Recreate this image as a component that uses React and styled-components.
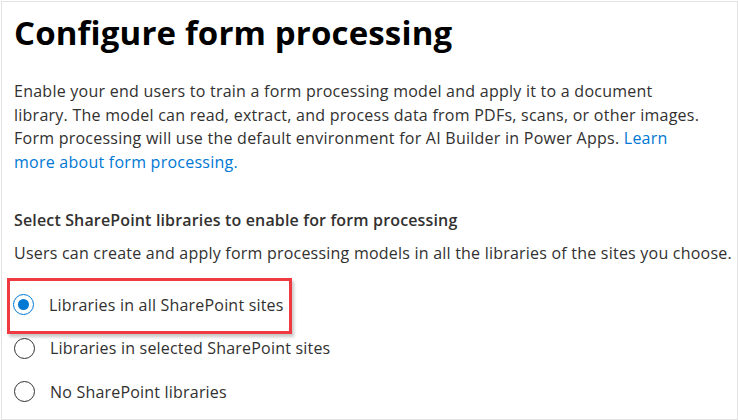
import styled, { createGlobalStyle } from "styled-components";

const GlobalStyle = createGlobalStyle`
  body {
    margin: 0;
    background: #ffffff;
    font-family: "Open Sans", "Noto Sans", sans-serif;
  }
`;

const options = [
  { id: "all", label: "Libraries in all SharePoint sites", highlighted: true },
  { id: "selected", label: "Libraries in selected SharePoint sites" },
  { id: "none", label: "No SharePoint libraries" },
];

export default function App() {
  const selected = "all";
  return (
    <>
      <GlobalStyle />
      <Frame>
        <Title>Configure form processing</Title>
        <Description>
          Enable your end users to train a form processing model and apply it to a document
          <br />
          library. The model can read, extract, and process data from PDFs, scans, or other images.
          <br />
          Form processing will use the default environment for AI Builder in Power Apps.{" "}
          <Link href="#">
            Learn
            <br />
            more about form processing.
          </Link>
        </Description>
        <SectionTitle>Select SharePoint libraries to enable for form processing</SectionTitle>
        <Hint>
          Users can create and apply form processing models in all the libraries of the sites you
          choose.
        </Hint>
        <RadioList>
          {options.map((opt) => {
            const row = (
              <RadioRow key={opt.id}>
                <RadioCircle $checked={opt.id === selected} />
                <RadioLabel>{opt.label}</RadioLabel>
              </RadioRow>
            );
            return opt.highlighted ? <Highlight key={opt.id}>{row}</Highlight> : row;
          })}
        </RadioList>
      </Frame>
    </>
  );
}

const Frame = styled.div`
  box-sizing: border-box;
  margin: 1px 0 0 1px;
  width: 737px;
  height: 419px;
  border: 1px solid #e3e3e3;
  padding: 0 2px 0 12px;
  overflow: hidden;
`;

const Title = styled.h1`
  margin: 9px 0 0;
  font-size: 33px;
  font-weight: 700;
  line-height: 44px;
  color: #000000;
  letter-spacing: 0.15px;
  white-space: nowrap;
`;

const Description = styled.p`
  margin: 25px 0 0;
  font-size: 16px;
  line-height: 23.5px;
  color: #323130;
  letter-spacing: 0.25px;
  white-space: nowrap;
`;

const Link = styled.a`
  color: #0078d4;
  text-decoration: none;
`;

const SectionTitle = styled.h2`
  margin: 35px 0 0;
  font-size: 16px;
  font-weight: 600;
  line-height: 22px;
  color: #323130;
  letter-spacing: 0.15px;
  white-space: nowrap;
`;

const Hint = styled.p`
  margin: 11px 0 0;
  font-size: 16px;
  line-height: 22px;
  color: #323130;
  letter-spacing: 0.22px;
  white-space: nowrap;
`;

const RadioList = styled.div`
  display: flex;
  flex-direction: column;
  margin-top: 19px;
`;

const Highlight = styled.div`
  align-self: flex-start;
  margin: -5px 0 -7px -7px;
  padding: 2px 5px 4px 3px;
  border: 3px solid #ee3a40;
  box-shadow: 2px 3px 3px rgba(0, 0, 0, 0.22);
`;

const RadioRow = styled.label`
  display: flex;
  align-items: center;
  gap: 15px;
  height: 43.5px;
`;

const RadioCircle = styled.span`
  box-sizing: border-box;
  flex: none;
  width: 21px;
  height: 21px;
  border-radius: 50%;
  border: 1.5px solid ${(p) => (p.$checked ? "#0078d4" : "#323130")};
  display: flex;
  align-items: center;
  justify-content: center;

  &::after {
    content: "";
    width: 11px;
    height: 11px;
    border-radius: 50%;
    background: ${(p) => (p.$checked ? "#0078d4" : "transparent")};
  }
`;

const RadioLabel = styled.span`
  font-size: 16px;
  line-height: 22px;
  color: #323130;
  letter-spacing: 0.2px;
`;
